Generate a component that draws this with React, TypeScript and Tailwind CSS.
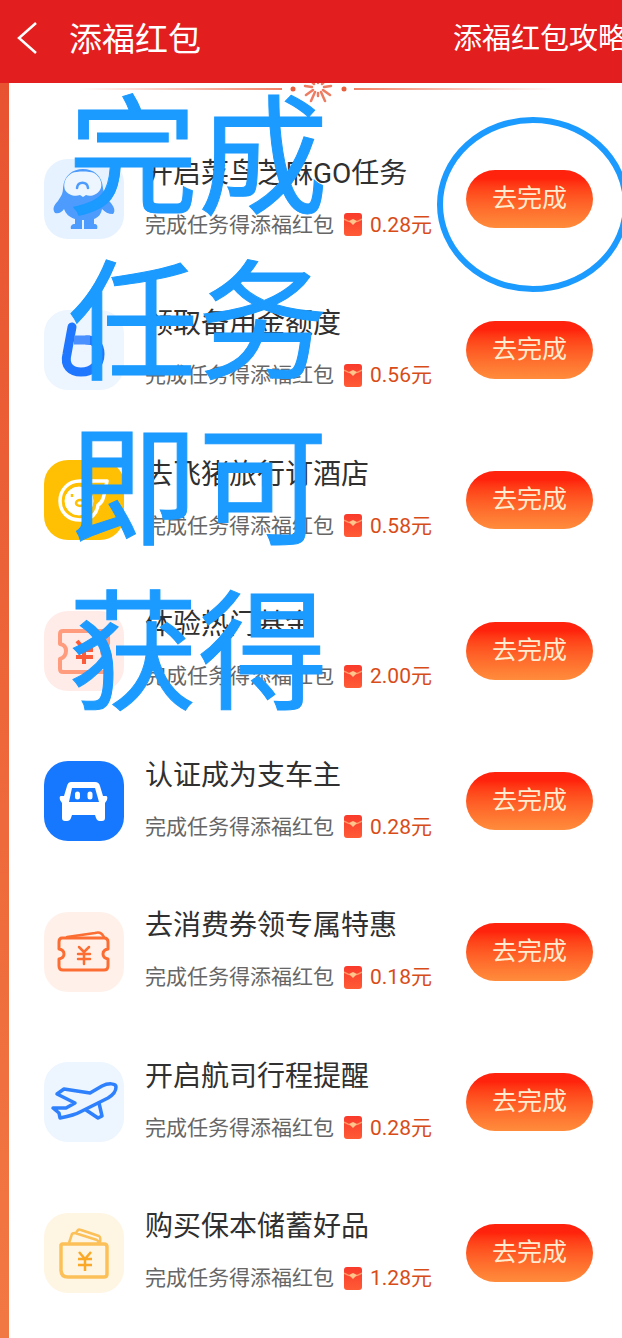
import React from "react";

type IconName = "penguin" | "six" | "pig" | "coupon" | "car" | "ticket" | "plane" | "wallet";

interface Task {
  title: string;
  amount: string;
  icon: IconName;
}

const tasks: Task[] = [
  { title: "开启菜鸟芝麻GO任务", amount: "0.28元", icon: "penguin" },
  { title: "领取备用金额度", amount: "0.56元", icon: "six" },
  { title: "去飞猪旅行订酒店", amount: "0.58元", icon: "pig" },
  { title: "体验热门基金", amount: "2.00元", icon: "coupon" },
  { title: "认证成为支车主", amount: "0.28元", icon: "car" },
  { title: "去消费券领专属特惠", amount: "0.18元", icon: "ticket" },
  { title: "开启航司行程提醒", amount: "0.28元", icon: "plane" },
  { title: "购买保本储蓄好品", amount: "1.28元", icon: "wallet" },
];

const tile: Record<IconName, string> = {
  penguin: "bg-[#e6f2ff]",
  six: "bg-[#edf5ff]",
  pig: "bg-[#ffc003]",
  coupon: "bg-[#ffece8]",
  car: "bg-[#1677ff]",
  ticket: "bg-[#fff1ea]",
  plane: "bg-[#edf5ff]",
  wallet: "bg-[#fff5e3]",
};

const art: Record<IconName, React.ReactNode> = {
  penguin: (
    <>
      <path
        d="M19 29C20 16 29 10 39 10S58 16 59 29C60 36 62 38 65 42C70 47 72 52 69 55C64 55 61 53 58 50C57 55 55 58 50 60V65C53 65 54 67 53 70H40V61H38V70H27C26 67 28 65 31 65V60C25 58 22 55 20 50C18 53 15 55 11 54C8 50 10 46 14 42C17 37 19 35 19 29Z"
        fill="#4c9bfd"
      />
      <path d="M28 14C33 12 45 12 50 14C57 18 59 26 56 31C53 36 46 38 42 36L39 38L36 36C31 38 24 36 21 31C19 25 21 18 28 14Z" fill="#edf6ff" />
      <path d="M33 29C34 22 43 22 44 29" fill="none" stroke="#4c9bfd" strokeWidth="2.500" strokeLinecap="round" />
    </>
  ),
  six: (
    <>
      <path d="M28 17 23 44C20 56 27 62 37 62C49 62 56 54 56 44C56 35 51 30 43 30" fill="none" stroke="#2077ff" strokeWidth="9" strokeLinecap="round" />
      <path d="M30 30H46" stroke="#4a90ff" strokeWidth="9" />
    </>
  ),
  pig: (
    <g fill="none" stroke="#fff">
      <path d="M63 21H36C24 21 16 30 16 41C16 52 24 60 36 60C48 60 53 53 54 45C60 42 60 34 63 21Z" strokeWidth="3.500" strokeLinejoin="round" />
      <circle cx="35" cy="41" r="14" fill="#fff" strokeWidth="1" />
      <ellipse cx="36" cy="43" rx="4" ry="3" stroke="#ffc003" fill="#fff" strokeWidth="2.500" />
      <path d="M28 34v3M40 34v3" stroke="#ffc003" strokeWidth="2.500" />
    </g>
  ),
  coupon: (
    <g fill="none" stroke="#ff9c7d" strokeWidth="4" strokeLinejoin="round">
      <path d="M19 20H61Q64 20 64 23V33Q58 35 58 40T64 48V58Q64 61 61 61H19Q16 61 16 58V48Q22 46 22 40T16 33V23Q16 20 19 20Z" />
      <path d="M33 30 40 38 48 30M32 39H49M32 46H49M40 38V53" stroke="#fb5b38" />
    </g>
  ),
  car: (
    <>
      <path
        d="M27 21H51Q55 21 56 25L59 35H62Q64 35 63 39L61 42V57Q61 60 58 60H55Q53 60 52 57L51 54H28L27 57Q26 60 23 60H21Q18 60 18 57V42L16 39Q15 35 17 35H20L23 25Q24 21 27 21Z"
        fill="#fff"
      />
      <path d="M28 27H51L55 41H25Z" fill="#1677ff" />
      <path d="M33.500 33V36M46 33V36" stroke="#fff" strokeWidth="5" strokeLinecap="round" />
    </>
  ),
  ticket: (
    <g fill="none" stroke="#fb6d32" strokeWidth="3" strokeLinejoin="round" strokeLinecap="round">
      <path d="M18 26H60Q64 26 64 30V37Q59 38 59 42T64 47V54Q64 58 60 58H19Q15 58 15 54V47Q20 46 20 42T15 37V30Q15 26 18 26Z" />
      <path d="M23 25 51 21Q57 19 60 25" strokeWidth="2.500" />
      <path d="M35 35 40 40 45 35M34 42H46M34 47H46M40 40V52" strokeWidth="2.500" />
    </g>
  ),
  plane: (
    <g fill="none" stroke="#2e80fd" strokeWidth="3.500" strokeLinejoin="round" strokeLinecap="round">
      <path d="M13 32 20 27 46 31 58 24C64 21 72 21 72 25C72 29 69 33 64 36L36 50Q31 53 16 56L15 51 9 46 22 46 31 41Z" />
      <path d="M42 48 54 56 58 54 55 41" />
    </g>
  ),
  wallet: (
    <g fill="none" stroke="#fcc058" strokeWidth="3.500" strokeLinejoin="round">
      <path d="M18 31H60Q63 31 63 34V61Q63 64 60 64H24Q17 64 17 57V32Z" />
      <path d="M25 30 28 21 Q29 20 31 20L53 27Q55 28 54 31M32 20 34 17Q35 16 37 17L55 23Q57 24 56 30" strokeWidth="2.500" />
      <path d="M35 39 41 46 47 39M34 46H48M34 52H48M41 46V58" stroke="#f9a925" strokeWidth="2.500" />
    </g>
  ),
};

function Envelope() {
  return (
    <svg viewBox="0 0 18 23" className="h-[23px] w-[18px] shrink-0" aria-hidden="true">
      <defs>
        <linearGradient id="envelope" x2="0" y2="1">
          <stop stopColor="#f93a2b" />
          <stop offset="1" stopColor="#ff5b36" />
        </linearGradient>
      </defs>
      <rect width="18" height="23" rx="3" fill="url(#envelope)" />
      <path d="M0 6Q9 12 18 6" fill="none" stroke="#ff9663" strokeWidth="1.500" />
      <path d="M5 8 9 6 13 8 9 12Z" fill="#ffc58d" />
    </svg>
  );
}

function Divider() {
  return (
    <div className="flex h-[41px] items-start justify-center gap-1 overflow-hidden pl-1" aria-hidden="true">
      <div className="mt-[5px] h-[2px] w-[204px] bg-linear-to-r from-transparent to-[#ef8266]" />
      <svg viewBox="0 0 64 26" className="h-[26px] w-16 shrink-0">
        <circle cx="7" cy="6" r="2.500" fill="#e9603f" />
        <circle cx="58" cy="6" r="2.500" fill="#e9603f" />
        <g stroke="#ee7c62" strokeWidth="2.500" strokeLinecap="round">
          <path d="M32 10V13M29 9 25 18M35 9 39 18M27 7 20 12M37 7 44 12M26 4 19 3M38 4 45 3M28 1 24-3M36 1 40-3M32 0V-3" />
        </g>
      </svg>
      <div className="mt-[5px] h-[2px] w-[204px] bg-linear-to-l from-transparent to-[#ef8266]" />
    </div>
  );
}

function TaskRow({ task }: { task: Task }) {
  return (
    <li className="flex items-center odd:h-[150px] even:h-[151px]">
      <svg viewBox="0 0 80 80" className={`size-20 shrink-0 rounded-3xl ${tile[task.icon]}`} aria-hidden="true">
        {art[task.icon]}
      </svg>
      <div className="ml-[21px] flex min-w-0 flex-1 flex-col gap-[23px]">
        <h2 className="text-[28px] leading-7 whitespace-nowrap text-[#303030]">{task.title}</h2>
        <p className="flex items-center text-[21px] leading-7 whitespace-nowrap text-[#666]">
          完成任务得添福红包
          <span className="ml-[10px] flex items-center gap-2 text-[#d84c18]">
            <Envelope />
            {task.amount}
          </span>
        </p>
      </div>
      <button
        type="button"
        className="h-[58px] w-[127px] shrink-0 rounded-full bg-linear-to-b from-[#ff220c] from-15% to-[#ff8c3c] text-[25px] text-[#ffecd0]"
      >
        去完成
      </button>
    </li>
  );
}

export default function App() {
  return (
    <div className="relative overflow-hidden bg-linear-to-b from-[#e7502f] to-[#f27843] font-[Roboto,'Noto_Sans_CJK_SC',sans-serif]">
      <header className="flex h-[83px] items-center overflow-hidden bg-[#e21e1f] pb-1 pl-4 whitespace-nowrap text-white">
        <button type="button" aria-label="返回" className="mr-8 shrink-0 pb-1">
          <svg viewBox="0 0 21 34" className="h-[34px] w-[21px]" fill="none" stroke="currentColor" strokeWidth="2.500">
            <path d="M20 2 3 17 20 32" />
          </svg>
        </button>
        <h1 className="flex-1 text-[33px]">添福红包</h1>
        <a href="#guide" className="-mr-[5px] shrink-0 text-[29px]">
          添福红包攻略
        </a>
      </header>

      <main className="ml-[9px] bg-white pb-[10px]">
        <Divider />
        <ul className="pr-[29px] pl-[35px]">
          {tasks.map((task) => (
            <TaskRow key={task.title} task={task} />
          ))}
        </ul>
      </main>

      <p className="pointer-events-none absolute top-[77px] left-[68px] text-[130px] leading-[165px] text-[#1b9aff] [-webkit-text-stroke:1px_#1b9aff]">
        完成
        <br />
        任务
        <br />
        即可
        <br />
        获得
      </p>
      <svg viewBox="0 0 192 175" className="pointer-events-none absolute top-[117px] left-[437px] h-[175px] w-48" aria-hidden="true">
        <ellipse cx="96" cy="87.500" rx="93" ry="84.500" fill="none" stroke="#1b9aff" strokeWidth="6" />
      </svg>
    </div>
  );
}
